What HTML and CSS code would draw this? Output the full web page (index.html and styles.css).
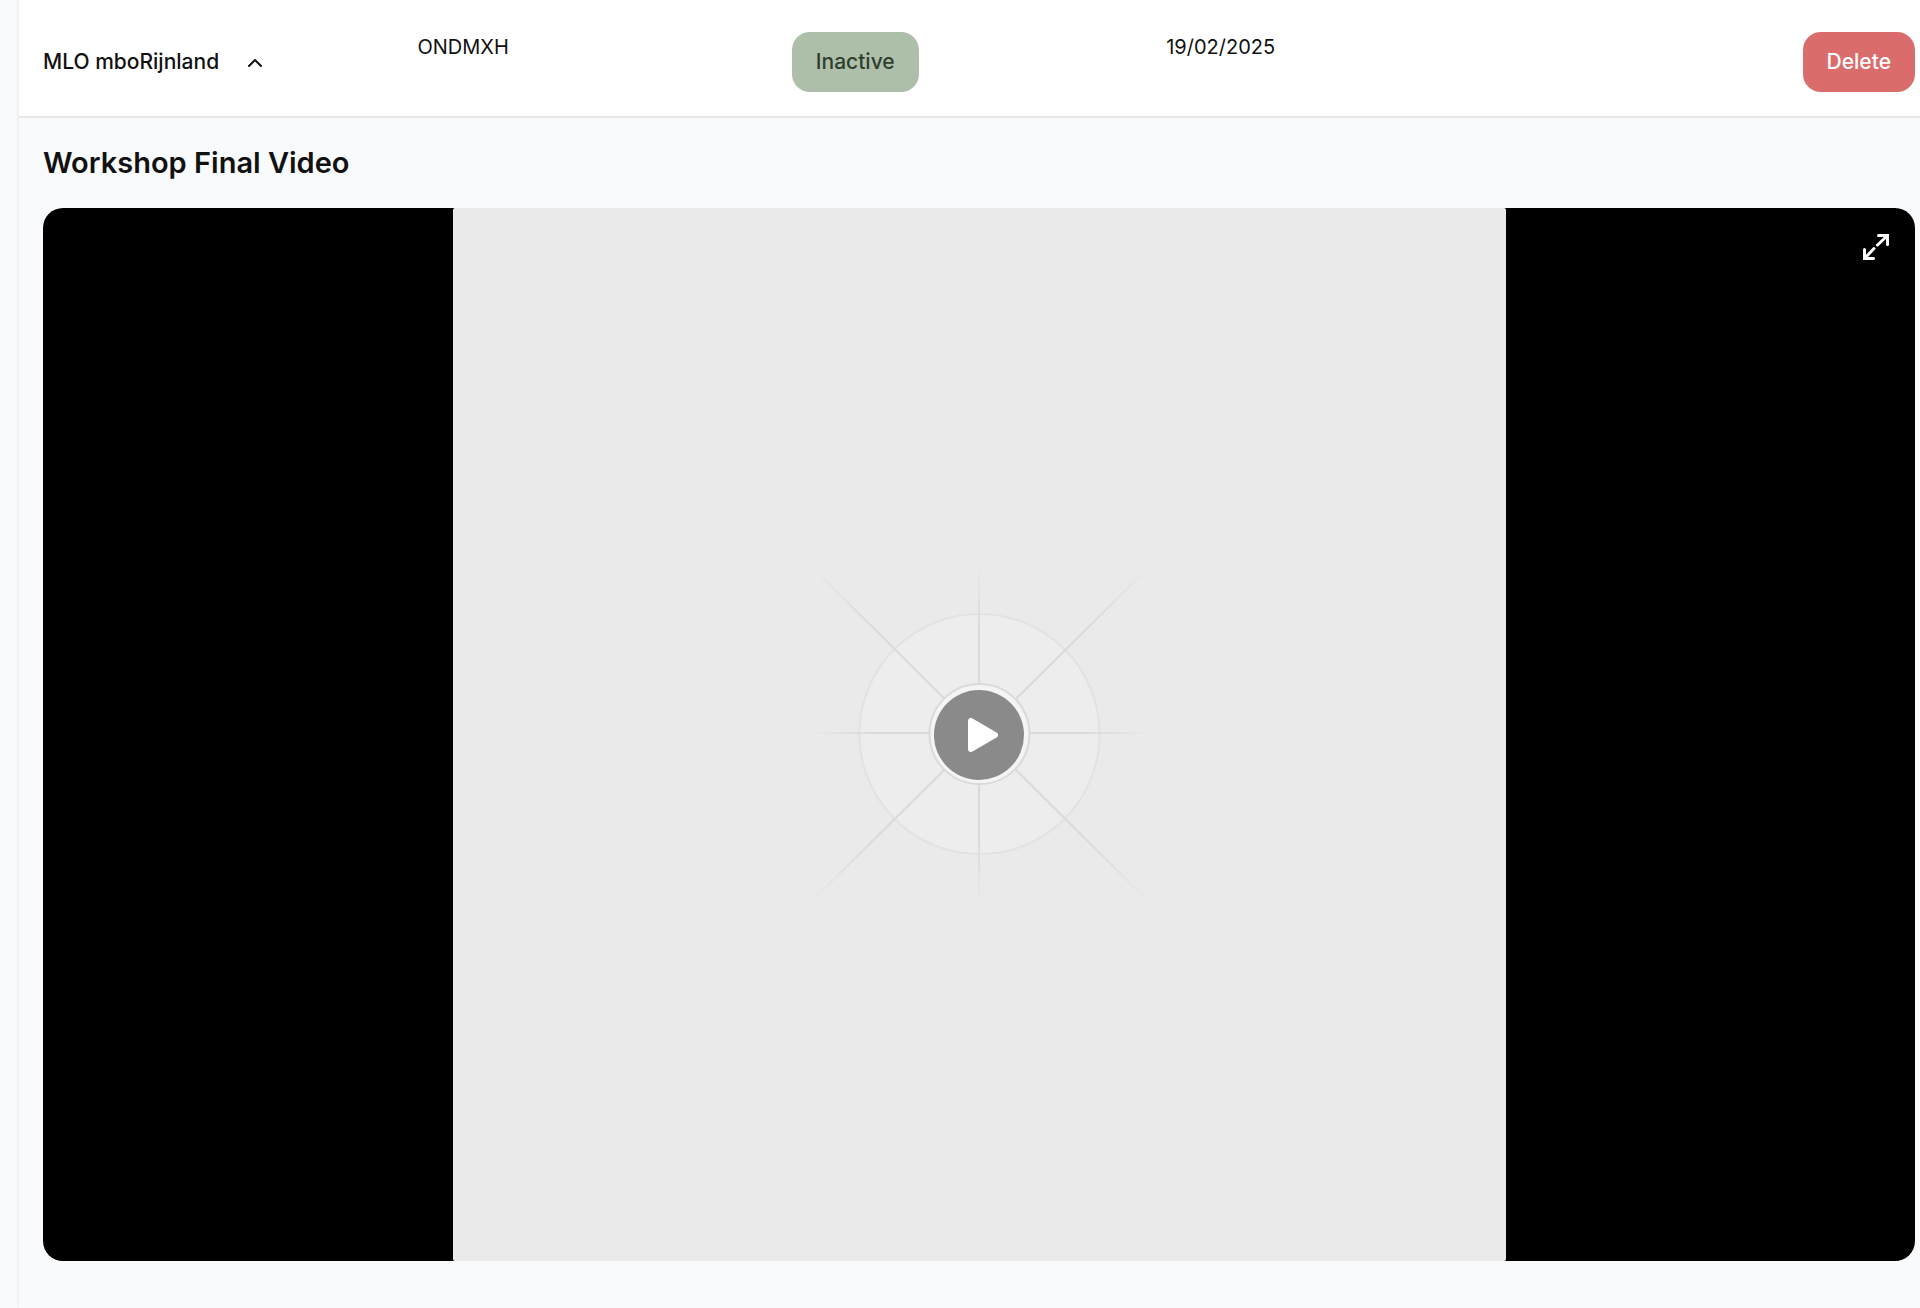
FILE: index.html
```html
<!DOCTYPE html>
<html lang="en">
<head>
<meta charset="utf-8">
<title>Workshops</title>
<link rel="stylesheet" href="styles.css">
</head>
<body>
<main class="panel">
  <header class="row">
    <div class="cell cell-name">
      <span class="name">MLO mboRijnland</span>
      <button class="toggle" type="button" aria-label="Collapse">
        <svg width="16" height="16" viewBox="0 0 16 16" fill="none" stroke="currentColor" stroke-width="2" stroke-linecap="round" stroke-linejoin="round"><path d="M2 12 8 6l6 6"/></svg>
      </button>
    </div>
    <div class="cell">ONDMXH</div>
    <div class="cell cell-button"><button class="btn btn-status" type="button">Inactive</button></div>
    <div class="cell">19/02/2025</div>
    <div class="cell cell-button cell-end"><button class="btn btn-delete" type="button">Delete</button></div>
  </header>
  <section class="content">
    <h2 class="title">Workshop Final Video</h2>
    <div class="video">
      <svg class="poster" viewBox="0 0 1052 1052" aria-hidden="true">
        <defs>
          <radialGradient id="ray" gradientUnits="userSpaceOnUse" cx="526" cy="526" r="170">
            <stop offset="0.6" stop-color="#d9d9d9"/>
            <stop offset="1" stop-color="#d9d9d9" stop-opacity="0"/>
          </radialGradient>
          <radialGradient id="ray-long" gradientUnits="userSpaceOnUse" cx="526" cy="526" r="244">
            <stop offset="0.6" stop-color="#d9d9d9"/>
            <stop offset="1" stop-color="#d9d9d9" stop-opacity="0"/>
          </radialGradient>
        </defs>
        <rect width="1052" height="1052" rx="2" fill="#eaeaea"/>
        <circle cx="526" cy="525.500" r="120" fill="#ededed" stroke="#e2e2e2" stroke-width="2"/>
        <g stroke="url(#ray)" stroke-width="2">
          <path d="M525.500 356 525.600 696"/>
          <path d="M356 524.500 696 524.600"/>
        </g>
        <g stroke="url(#ray-long)" stroke-width="2">
          <path d="M357 357 696 694"/>
          <path d="M357 694 697 357"/>
        </g>
        <circle cx="526" cy="525.500" r="50" fill="#f4f4f4" stroke="#dadada" stroke-width="2"/>
      </svg>
      <button class="play" type="button" aria-label="Play">
        <svg width="32" height="36" viewBox="0 0 32 36"><path d="M4 4v28L28 18Z" fill="#fff" stroke="#fff" stroke-width="6" stroke-linejoin="round"/></svg>
      </button>
      <button class="expand" type="button" aria-label="Full screen">
        <svg width="28" height="28" viewBox="0 0 28 28" fill="none" stroke="currentColor" stroke-width="3" stroke-linecap="round"><path d="M16.500 2.500H25.500V11.500M25 3 15.500 12M2.500 16.500V25.500H11.500M3 25 12 15.500"/></svg>
      </button>
    </div>
  </section>
</main>
</body>
</html>
```

FILE: styles.css
```css
* { box-sizing: border-box; }

body {
  margin: 0;
  padding-left: 19px;
  background: #f9fafc;
  color: #111;
  font-family: Inter, "Liberation Sans", sans-serif;
  font-size: 20px;
  line-height: 30px;
}

button {
  border: 0;
  padding: 0;
  font: inherit;
  cursor: pointer;
}

svg { display: block; }

.panel {
  min-height: 100vh;
  background: #f9fafc;
  box-shadow: 0 0 4px #0000001a;
}

.row {
  display: grid;
  grid-template-columns: repeat(5, 1fr);
  padding: 32px 5px 24px 24px;
  background: #fff;
  border-bottom: 2px solid #e7e7e7;
}

.cell-name {
  display: flex;
  align-items: center;
  gap: 28px;
  font-size: 21px;
  font-weight: 500;
}

.toggle {
  background: none;
  color: inherit;
}

.cell-end { justify-self: end; }

.btn {
  display: block;
  height: 60px;
  padding: 0 24px;
  border-radius: 18px;
  font-size: 21px;
  font-weight: 500;
}

.btn-status {
  background: #adbea9;
  color: #2d402e;
}

.btn-delete {
  background: #db6c6c;
  color: #fff;
}

.content { padding: 24px 5px 24px 24px; }

.title {
  margin: 0 0 24px;
  font-size: 29px;
  line-height: 42px;
  font-weight: 600;
}

.video {
  position: relative;
  display: grid;
  place-items: center;
  aspect-ratio: 16 / 9;
  overflow: hidden;
  border-radius: 20px;
  background: #000;
}

.poster {
  height: 100%;
  aspect-ratio: 1;
}

.play {
  position: absolute;
  display: grid;
  place-items: center;
  width: 90px;
  height: 90px;
  padding-left: 8px;
  border-radius: 50%;
  background: #8a8a8a;
}

.expand {
  position: absolute;
  top: 25px;
  right: 25px;
  background: none;
  color: #fff;
}
```
